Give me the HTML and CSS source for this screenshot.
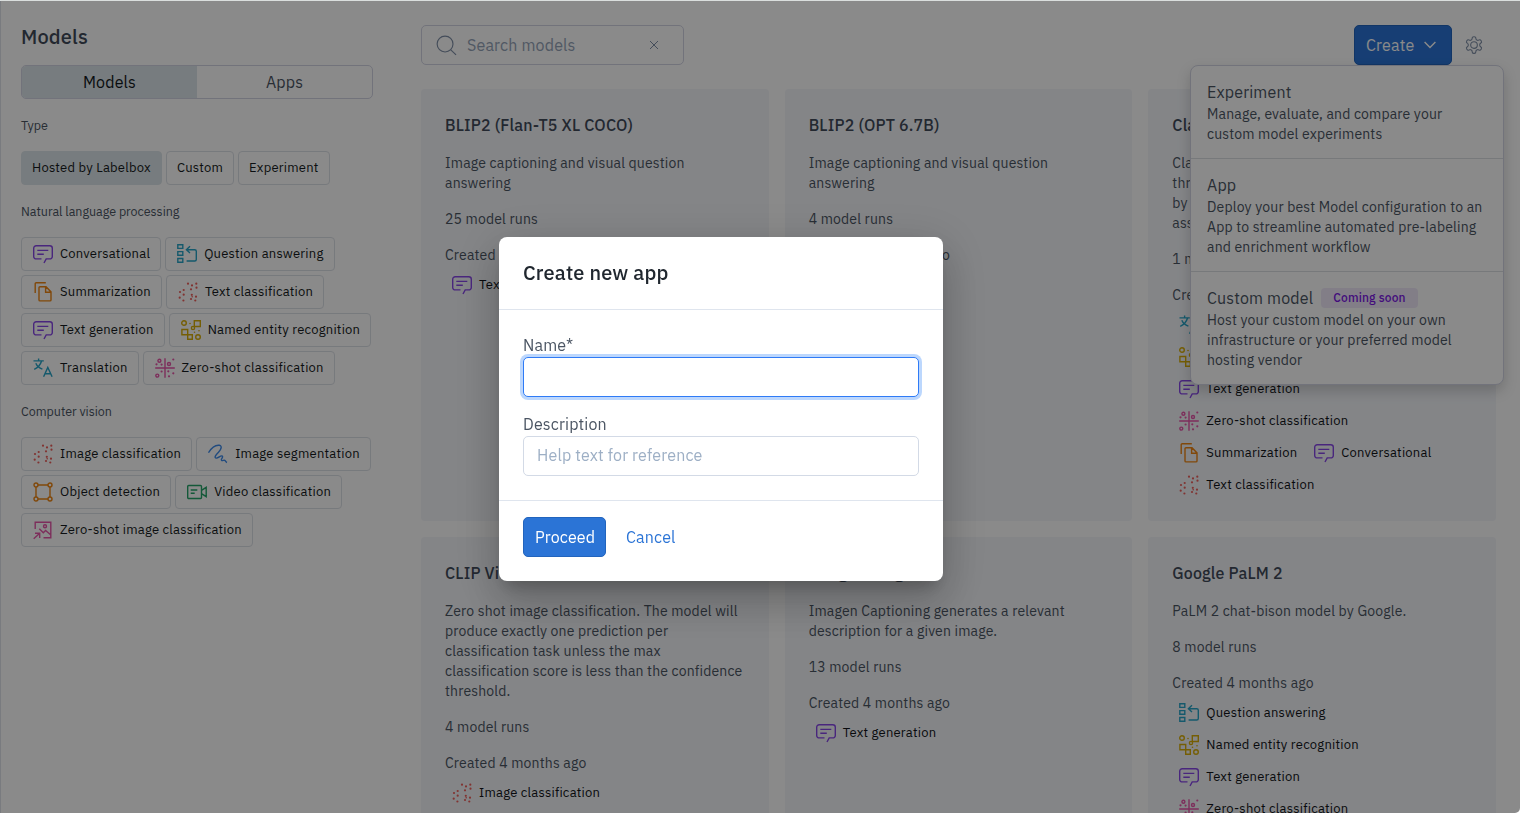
FILE: index.html
```html
<!DOCTYPE html>
<html lang="en">
<head>
  <meta charset="UTF-8">
  <meta name="viewport" content="width=device-width, initial-scale=1.0">
  <title>Models</title>
  <link rel="stylesheet" href="styles.css">
</head>
<body>
  <!-- Task icons -->
  <svg class="sprite">
    <symbol id="chat" viewBox="0 0 20 20">
      <path d="M8.5 14.9H3.2A2.5 2.5 0 0 1 .7 12.4V4.3a2.5 2.5 0 0 1 2.5-2.5h13.6a2.5 2.5 0 0 1 2.5 2.5v8.1a2.5 2.5 0 0 1-2.5 2.5h-3.6L11 19M4.3 6.4h11M4.3 10.3h6.5"/>
    </symbol>
    <symbol id="answer" viewBox="0 0 20 20">
      <path d="M.8.8h5v3.6h-5zM.8 7.6h5v3.6h-5zM.8 14.5h5v3.8h-5zM13 2.3L9.4 5.8 13 9M9.6 5.8h8.2a1.5 1.5 0 0 1 1.5 1.5v8.2a1.5 1.5 0 0 1-1.5 1.5H9.6"/>
    </symbol>
    <symbol id="pages" viewBox="0 0 20 20">
      <path d="M2.2 11V1.8a1 1 0 0 1 1-1h9.6M7 4.7h6l5 5.2v8a1 1 0 0 1-1 1H7a1 1 0 0 1-1-1V5.7a1 1 0 0 1 1-1zM12.6 5v5.2H18"/>
    </symbol>
    <symbol id="dots" viewBox="0 0 20 20">
      <g class="fill">
        <circle cx="10" cy="1.7" r="1.1"/><circle cx="18.3" cy="1.7" r="1.1"/><circle cx="14" cy="3.4" r="1.1"/>
        <circle cx="18.5" cy="5.7" r="1.1"/><circle cx="13" cy="7.3" r="1.1"/><circle cx="5.7" cy="8" r="1.1"/>
        <circle cx="2" cy="10" r="1.1"/><circle cx="5.7" cy="12.7" r="1.1"/><circle cx="1.7" cy="15.7" r="1.1"/>
        <circle cx="5.4" cy="18.5" r="1.1"/><circle cx="13.8" cy="12.8" r="1.1"/><circle cx="13" cy="17" r="1.1"/>
        <circle cx="18" cy="14.7" r="1.1"/><circle cx="17.3" cy="18.5" r="1.1"/><circle cx="14.2" cy="14.8" r=".8"/>
      </g>
    </symbol>
    <symbol id="entity" viewBox="0 0 20 20">
      <circle cx="3" cy="3" r="2.3"/><circle cx="12" cy="8" r="1.6"/><circle cx="17" cy="17" r="2.3"/>
      <path d="M13.3.8h6v5.7h-6zM.9 9.5h5.8v5.3H.9zM6.7 14.8h4.6v4.5H6.7z"/>
      <g class="fill"><circle cx="9" cy="3.5" r=".8"/><circle cx="13.5" cy="12.3" r=".8"/><circle cx="18" cy="10.7" r=".8"/></g>
    </symbol>
    <symbol id="translate" viewBox="0 0 20 20">
      <path d="M.5 2.9h10.3M5.6.4v2.5M8.6 3C7.4 6.8 4.8 9.8 1.2 11.3M2.8 5.2c1 2.4 3.4 4.8 6.6 6M10.6 18.8l4.2-9.4 4.3 9.4M12 15.7h5.8"/>
    </symbol>
    <symbol id="zeroshot" viewBox="0 0 20 20">
      <path d="M10 .2v19.6M.2 10h19.6"/>
      <circle cx="4.4" cy="2.7" r="1.5"/><circle cx="14" cy="6" r="1.5"/><circle cx="2.3" cy="17.6" r="1.5"/>
      <g class="fill">
        <circle cx="1.5" cy="6.3" r="1.1"/><circle cx="6.6" cy="6.6" r="1.1"/><circle cx="18.3" cy="1.5" r="1.1"/>
        <circle cx="13.3" cy="13.3" r="1.1"/><circle cx="6.6" cy="13.5" r="1.1"/><circle cx="18.3" cy="15.3" r="1.1"/>
        <circle cx="14" cy="18.3" r="1.1"/>
      </g>
    </symbol>
    <symbol id="segment" viewBox="0 0 20 20">
      <path d="M.5 8.7C3.5 3.8 8 .9 11.3 1.3c3.3.6 1.7 4.2-.8 7-2.5 2.6-4.7 5.2-2.4 5.8 2.2.4 4.7-3.3 6.2-2 1.3 1.2-2 3.3-.7 4.3 1 .7 2.3-.6 3.2-.1.9.5.7 1.6 2.2 2.2"/>
    </symbol>
    <symbol id="bbox" viewBox="0 0 20 20">
      <circle cx="3" cy="3" r="2"/><circle cx="17" cy="3" r="2"/><circle cx="3" cy="17" r="2"/><circle cx="17" cy="17" r="2"/>
      <path d="M5 3h10M5 17h10M3 5v10M17 5v10"/>
    </symbol>
    <symbol id="video" viewBox="0 0 20 20">
      <path d="M1.7 3.5h11.8a1 1 0 0 1 1 1v11a1 1 0 0 1-1 1H1.7a1 1 0 0 1-1-1v-11a1 1 0 0 1 1-1zM14.5 8.3l4.7-3v9.4l-4.7-3M3.7 8h6.6M3.7 11.2h4"/>
    </symbol>
    <symbol id="picture" viewBox="0 0 20 20">
      <path d="M2.2 9V2.3h15.6v15.4h-7.3M6.3 8.7l4 4 2.3-2.2 5 4.2M.7 18.7l6-5.4M2 13.3h4.7V18"/>
      <circle cx="12" cy="6.3" r="1.5"/>
    </symbol>
  </svg>

  <div class="page">
    <aside class="sidebar">
      <h1>Models</h1>
      <div class="tabs">
        <div class="tab active">Models</div>
        <div class="tab">Apps</div>
      </div>

      <h4>Type</h4>
      <div class="chips">
        <span class="chip selected">Hosted by Labelbox</span>
        <span class="chip">Custom</span>
        <span class="chip">Experiment</span>
      </div>

      <h4>Natural language processing</h4>
      <div class="chips">
        <span class="chip"><svg class="icon purple"><use href="#chat"/></svg>Conversational</span>
        <span class="chip"><svg class="icon teal"><use href="#answer"/></svg>Question answering</span>
        <span class="chip"><svg class="icon orange"><use href="#pages"/></svg>Summarization</span>
        <span class="chip"><svg class="icon red"><use href="#dots"/></svg>Text classification</span>
        <span class="chip"><svg class="icon purple"><use href="#chat"/></svg>Text generation</span>
        <span class="chip"><svg class="icon yellow"><use href="#entity"/></svg>Named entity recognition</span>
        <span class="chip"><svg class="icon teal"><use href="#translate"/></svg>Translation</span>
        <span class="chip"><svg class="icon pink"><use href="#zeroshot"/></svg>Zero-shot classification</span>
      </div>

      <h4>Computer vision</h4>
      <div class="chips">
        <span class="chip"><svg class="icon red"><use href="#dots"/></svg>Image classification</span>
        <span class="chip"><svg class="icon blue"><use href="#segment"/></svg>Image segmentation</span>
        <span class="chip"><svg class="icon orange"><use href="#bbox"/></svg>Object detection</span>
        <span class="chip"><svg class="icon green"><use href="#video"/></svg>Video classification</span>
        <span class="chip"><svg class="icon pink"><use href="#picture"/></svg>Zero-shot image classification</span>
      </div>
    </aside>

    <main class="main">
      <div class="toolbar">
        <div class="search">
          <svg class="search-icon" viewBox="0 0 22 22"><circle cx="9.5" cy="9.5" r="8.3"/><path d="M15.5 15.5l5.5 5.3"/></svg>
          <span>Search models</span>
          <svg class="clear" viewBox="0 0 10 10"><path d="M1 1l8 8M9 1L1 9"/></svg>
        </div>
        <button class="btn create">Create
          <svg class="chevron" viewBox="0 0 12 8"><path d="M.6 1L6 6.6 11.4 1"/></svg>
        </button>
        <svg class="gear" viewBox="0 0 24 24">
          <path d="M12.22 2h-.44a2 2 0 0 0-2 2v.18a2 2 0 0 1-1 1.73l-.43.25a2 2 0 0 1-2 0l-.15-.08a2 2 0 0 0-2.73.73l-.22.38a2 2 0 0 0 .73 2.73l.15.1a2 2 0 0 1 1 1.72v.51a2 2 0 0 1-1 1.74l-.15.09a2 2 0 0 0-.73 2.73l.22.38a2 2 0 0 0 2.73.73l.15-.08a2 2 0 0 1 2 0l.43.25a2 2 0 0 1 1 1.73V20a2 2 0 0 0 2 2h.44a2 2 0 0 0 2-2v-.18a2 2 0 0 1 1-1.73l.43-.25a2 2 0 0 1 2 0l.15.08a2 2 0 0 0 2.73-.73l.22-.39a2 2 0 0 0-.73-2.73l-.15-.08a2 2 0 0 1-1-1.74v-.5a2 2 0 0 1 1-1.74l.15-.09a2 2 0 0 0 .73-2.73l-.22-.38a2 2 0 0 0-2.73-.73l-.15.08a2 2 0 0 1-2 0l-.43-.25a2 2 0 0 1-1-1.73V4a2 2 0 0 0-2-2z"/>
          <circle cx="12" cy="12" r="4"/>
        </svg>

        <div class="menu">
          <div class="menu-item">
            <h3>Experiment</h3>
            <p>Manage, evaluate, and compare your<br>custom model experiments</p>
          </div>
          <div class="menu-item">
            <h3>App</h3>
            <p>Deploy your best Model configuration to an<br>App to streamline automated pre-labeling<br>and enrichment workflow</p>
          </div>
          <div class="menu-item">
            <h3>Custom model <span class="badge">Coming soon</span></h3>
            <p>Host your custom model on your own<br>infrastructure or your preferred model<br>hosting vendor</p>
          </div>
        </div>
      </div>

      <div class="grid">
        <div class="card">
          <h2>BLIP2 (Flan-T5 XL COCO)</h2>
          <p>Image captioning and visual question<br>answering</p>
          <p>25 model runs</p>
          <p>Created 4 months ago</p>
          <div class="tags">
            <span class="tag"><svg class="icon purple"><use href="#chat"/></svg>Text generation</span>
          </div>
        </div>
        <div class="card">
          <h2>BLIP2 (OPT 6.7B)</h2>
          <p>Image captioning and visual question<br>answering</p>
          <p>4 model runs</p>
          <p>Created 4 months ago</p>
          <div class="tags">
            <span class="tag"><svg class="icon purple"><use href="#chat"/></svg>Text generation</span>
          </div>
        </div>
        <div class="card">
          <h2>Claude</h2>
          <p>Claude can handle many text tasks<br>through a chat conversation. Built<br>by Anthropic as a general<br>assistant.</p>
          <p>1 model runs</p>
          <p>Created 4 months ago</p>
          <div class="tags">
            <span class="tag"><svg class="icon teal"><use href="#translate"/></svg>Translation</span>
            <span class="tag"><svg class="icon teal"><use href="#answer"/></svg>Question answering</span>
            <span class="tag"><svg class="icon yellow"><use href="#entity"/></svg>Named entity recognition</span>
            <span class="tag wide"><svg class="icon purple"><use href="#chat"/></svg>Text generation</span>
            <span class="tag wide"><svg class="icon pink"><use href="#zeroshot"/></svg>Zero-shot classification</span>
            <span class="tag"><svg class="icon orange"><use href="#pages"/></svg>Summarization</span>
            <span class="tag"><svg class="icon purple"><use href="#chat"/></svg>Conversational</span>
            <span class="tag"><svg class="icon red"><use href="#dots"/></svg>Text classification</span>
          </div>
        </div>
        <div class="card">
          <h2>CLIP ViT</h2>
          <p>Zero shot image classification. The model will<br>produce exactly one prediction per<br>classification task unless the max<br>classification score is less than the confidence<br>threshold.</p>
          <p>4 model runs</p>
          <p>Created 4 months ago</p>
          <div class="tags">
            <span class="tag"><svg class="icon red"><use href="#dots"/></svg>Image classification</span>
          </div>
        </div>
        <div class="card">
          <h2>Google Imagen</h2>
          <p>Imagen Captioning generates a relevant<br>description for a given image.</p>
          <p>13 model runs</p>
          <p>Created 4 months ago</p>
          <div class="tags">
            <span class="tag"><svg class="icon purple"><use href="#chat"/></svg>Text generation</span>
          </div>
        </div>
        <div class="card">
          <h2>Google PaLM 2</h2>
          <p>PaLM 2 chat-bison model by Google.</p>
          <p>8 model runs</p>
          <p>Created 4 months ago</p>
          <div class="tags">
            <span class="tag wide"><svg class="icon teal"><use href="#answer"/></svg>Question answering</span>
            <span class="tag wide"><svg class="icon yellow"><use href="#entity"/></svg>Named entity recognition</span>
            <span class="tag wide"><svg class="icon purple"><use href="#chat"/></svg>Text generation</span>
            <span class="tag wide"><svg class="icon pink"><use href="#zeroshot"/></svg>Zero-shot classification</span>
          </div>
        </div>
      </div>
    </main>
  </div>

  <div class="overlay">
    <div class="modal">
      <div class="modal-header">Create new app</div>
      <div class="modal-body">
        <label for="name">Name*</label>
        <input class="focused" type="text" id="name">
        <label for="description">Description</label>
        <input type="text" id="description" placeholder="Help text for reference">
      </div>
      <div class="modal-footer">
        <button class="btn proceed">Proceed</button>
        <button class="btn link">Cancel</button>
      </div>
    </div>
  </div>
</body>
</html>
```

FILE: styles.css
```css
* {
  box-sizing: border-box;
}
html {
  background: #fff;
}
body {
  margin: 0;
  height: 813px;
  overflow: hidden;
  font-family: "IBM Plex Sans", Roboto, "Liberation Sans", sans-serif;
  font-size: 14px;
  letter-spacing: 0.16px;
  color: #4b5563;
}
h1, h2, h3, h4, p {
  margin: 0;
}
.sprite {
  display: none;
}

.page {
  display: flex;
  height: 813px;
  overflow: hidden;
  border-top: 1px solid #dadedd;
  border-left: 1px solid #dfe4ea;
  background: #fff;
}

/* Sidebar */
.sidebar {
  width: 372px;
  flex: none;
  padding: 24px 0 0 20px;
}
.sidebar h1 {
  font-size: 20px;
  font-weight: 500;
  line-height: 24px;
  color: #414b5a;
}
.tabs {
  display: flex;
  height: 34px;
  margin-top: 16px;
  border: 1px solid #d3d5e4;
  border-radius: 5px;
  overflow: hidden;
}
.tab {
  flex: 1;
  text-align: center;
  font-size: 16px;
  line-height: 32px;
}
.tab.active {
  background: #dde5ea;
  color: #111820;
}
.sidebar h4 {
  margin: 18px 0;
  font-size: 12.5px;
  font-weight: 400;
  line-height: 16px;
  letter-spacing: -0.03px;
}
.chips {
  display: flex;
  flex-wrap: wrap;
  gap: 4px;
}
.chip {
  display: flex;
  align-items: center;
  height: 34px;
  padding: 0 10px 2px;
  border: 1px solid #dde1e8;
  border-radius: 4px;
  font-size: 13px;
  letter-spacing: 0.22px;
  color: #151a20;
  white-space: nowrap;
}
.chip.selected {
  background: #dde5ea;
  border-color: #dde5ea;
}

/* Icons */
.icon {
  width: 20px;
  height: 20px;
  margin: 2px 7px 0 1px;
  fill: none;
  stroke: currentColor;
  stroke-width: 1.4;
}
.fill {
  fill: currentColor;
  stroke: none;
}
.purple { color: #8847e8; }
.teal { color: #27a5c8; }
.orange { color: #ee8613; }
.red { color: #ee5f5b; }
.yellow { color: #d9ae08; }
.pink { color: #e756a9; }
.blue { color: #3d8bea; }
.green { color: #25a56a; }

/* Main column */
.main {
  flex: 1;
  padding: 24px 24px 0 48px;
}
.toolbar {
  position: relative;
  display: flex;
  align-items: center;
  height: 40px;
}
.search {
  display: flex;
  align-items: center;
  width: 263px;
  height: 40px;
  margin-right: auto;
  padding: 0 24px 0 14px;
  border: 1px solid #d3d5e4;
  border-radius: 5px;
  font-size: 16px;
  color: #94a3b8;
}
.search span {
  flex: 1;
}
.search-icon {
  width: 21px;
  height: 21px;
  margin-right: 10px;
}
.clear {
  width: 10px;
  height: 10px;
}
.search-icon, .clear, .gear, .chevron {
  fill: none;
  stroke: #7e8ea6;
  stroke-width: 1.2;
}
.search .clear {
  stroke-width: 1;
}
.btn {
  height: 40px;
  padding: 0 11px;
  border: 1px solid #2264bd;
  border-radius: 5px;
  background: #2b74d6;
  color: #fff;
  font-family: inherit;
  font-size: 16px;
  letter-spacing: 0.16px;
}
.create {
  display: flex;
  align-items: center;
  justify-content: space-between;
  width: 98px;
  padding-right: 15px;
}
.btn .chevron {
  width: 12px;
  height: 8px;
  stroke: #fff;
  stroke-width: 1.4;
}
.gear {
  width: 20px;
  height: 20px;
  margin: 0 12px;
  stroke-width: 1.3;
}

.menu {
  position: absolute;
  top: 40px;
  right: -8px;
  z-index: 1;
  width: 314px;
  border: 1px solid #d3d5e4;
  border-radius: 8px;
  background: #fff;
  box-shadow: 0 6px 14px rgba(0, 0, 0, 0.18);
  white-space: nowrap;
}
.menu-item {
  padding: 14px 16px;
}
.menu-item + .menu-item {
  border-top: 1px solid #dcdfe4;
}
.menu h3 {
  display: flex;
  align-items: center;
  font-size: 16px;
  font-weight: 400;
  line-height: 24px;
}
.menu p {
  line-height: 20px;
}
.badge {
  height: 20px;
  margin-left: 8px;
  padding: 0 12px;
  border-radius: 4px;
  background: #f1e9fa;
  color: #7c16e6;
  font-size: 12px;
  font-weight: 500;
  line-height: 20px;
}

.grid {
  display: grid;
  grid-template-columns: repeat(3, minmax(0, 1fr));
  gap: 16px;
  margin-top: 24px;
}
.card {
  min-height: 432px;
  padding: 24px 24px 0;
  border-radius: 4px;
  background: #f4f6fa;
}
.card h2 {
  font-size: 16px;
  font-weight: 500;
  line-height: 24px;
  color: #414b5a;
}
.card p {
  margin-top: 16px;
  line-height: 20px;
  white-space: nowrap;
}
.tags {
  display: flex;
  flex-wrap: wrap;
  margin-top: 4px;
}
.tag {
  display: flex;
  align-items: center;
  height: 32px;
  padding: 0 10px 2px 6px;
  font-size: 13px;
  letter-spacing: 0.22px;
  color: #111418;
  white-space: nowrap;
}
.tag.wide {
  margin-right: 100px;
}

/* Dialog */
.overlay {
  position: fixed;
  inset: 1px 0 0;
  z-index: 2;
  display: flex;
  align-items: center;
  justify-content: center;
  padding: 4px 78px 0 0;
  border-bottom-right-radius: 5px;
  background: rgba(0, 0, 0, 0.46);
}
.modal {
  width: 444px;
  border-radius: 8px;
  background: #fff;
  box-shadow: 0 11px 15px -7px rgba(0, 0, 0, 0.2), 0 24px 38px 3px rgba(0, 0, 0, 0.14), 0 9px 46px 8px rgba(0, 0, 0, 0.12);
}
.modal-header {
  padding: 24px;
  font-size: 20px;
  font-weight: 500;
  line-height: 24px;
  color: #20272f;
}
.modal-body {
  padding: 24px;
  border-top: 1px solid #dfe5ee;
  border-bottom: 1px solid #dfe5ee;
}
.modal label {
  display: block;
  font-size: 16px;
  line-height: 23px;
}
.modal input {
  display: block;
  width: 396px;
  height: 40px;
  padding: 0 13px 2px;
  border: 1px solid #d3dae6;
  border-radius: 5px;
  font-family: inherit;
  font-size: 16px;
  letter-spacing: 0.16px;
  outline: none;
}
.modal input.focused {
  margin-bottom: 16px;
  border-color: #2f7bf6;
  box-shadow: 0 0 0 3px #bcd7fd;
}
.modal input::placeholder {
  color: #9dafc5;
}
.modal-footer {
  display: flex;
  gap: 8px;
  padding: 16px 24px 24px;
}
.proceed {
  width: 83px;
}
.btn.link {
  border-color: transparent;
  background: none;
  color: #2b74d6;
}
```
